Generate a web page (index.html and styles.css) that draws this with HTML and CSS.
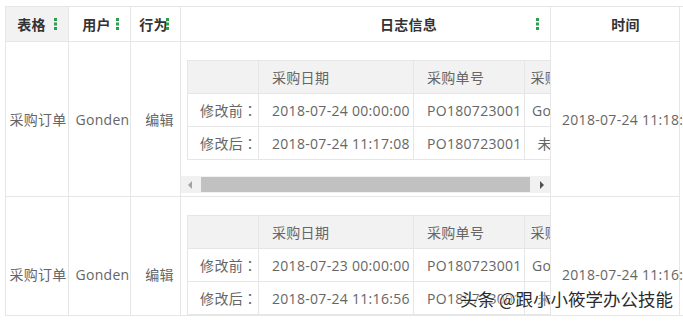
FILE: index.html
```html
<!DOCTYPE html>
<html lang="zh-CN">
<head>
<meta charset="utf-8">
<title>操作日志</title>
<link rel="stylesheet" href="styles.css">
</head>
<body>
<div class="page">
  <div class="grid">
    <div class="th th-table"><span class="label">表格</span><svg class="handle" viewBox="0 0 3 12" width="3" height="12"><rect x="0" y="0" width="3" height="3"/><rect x="0" y="4.5" width="3" height="3"/><rect x="0" y="9" width="3" height="3"/></svg></div>
    <div class="th th-user"><span class="label">用户</span><svg class="handle" viewBox="0 0 3 12" width="3" height="12"><rect x="0" y="0" width="3" height="3"/><rect x="0" y="4.5" width="3" height="3"/><rect x="0" y="9" width="3" height="3"/></svg></div>
    <div class="th th-action"><span class="label">行为</span><svg class="handle" viewBox="0 0 3 12" width="3" height="12"><rect x="0" y="0" width="3" height="3"/><rect x="0" y="4.5" width="3" height="3"/><rect x="0" y="9" width="3" height="3"/></svg></div>
    <div class="th th-log"><span class="label">日志信息</span><svg class="handle" viewBox="0 0 3 12" width="3" height="12"><rect x="0" y="0" width="3" height="3"/><rect x="0" y="4.5" width="3" height="3"/><rect x="0" y="9" width="3" height="3"/></svg></div>
    <div class="th th-time"><span class="label">时间</span></div>

    <div class="td center col-a">采购订单</div>
    <div class="td center col-b">Gonden</div>
    <div class="td center col-c">编辑</div>
    <div class="td log">
      <div class="scroller">
        <div class="sub">
          <div class="sc head label-col"></div>
          <div class="sc head">采购日期</div>
          <div class="sc head">采购单号</div>
          <div class="sc head mid">采购人员</div>
          <div class="sc head">备注</div>

          <div class="sc label-col">修改前<span class="colon">：</span></div>
          <div class="sc">2018-07-24 00:00:00</div>
          <div class="sc">PO180723001</div>
          <div class="sc mid">Gonden</div>
          <div class="sc"></div>

          <div class="sc label-col">修改后<span class="colon">：</span></div>
          <div class="sc">2018-07-24 11:17:08</div>
          <div class="sc">PO180723001</div>
          <div class="sc mid">未审核</div>
          <div class="sc"></div>
        </div>
      </div>
      <div class="hbar">
        <div class="hbar-btn"><span class="arrow-left"></span></div>
        <div class="hbar-thumb"></div>
        <div class="hbar-track"></div>
        <div class="hbar-btn"><span class="arrow-right"></span></div>
      </div>
    </div>
    <div class="td time">2018-07-24 11:18:02</div>

    <div class="td center col-a">采购订单</div>
    <div class="td center col-b">Gonden</div>
    <div class="td center col-c">编辑</div>
    <div class="td log">
      <div class="scroller">
        <div class="sub">
          <div class="sc head label-col"></div>
          <div class="sc head">采购日期</div>
          <div class="sc head">采购单号</div>
          <div class="sc head mid">采购人员</div>
          <div class="sc head">备注</div>

          <div class="sc label-col">修改前<span class="colon">：</span></div>
          <div class="sc">2018-07-23 00:00:00</div>
          <div class="sc">PO180723001</div>
          <div class="sc mid">Gonden</div>
          <div class="sc"></div>

          <div class="sc label-col">修改后<span class="colon">：</span></div>
          <div class="sc">2018-07-24 11:16:56</div>
          <div class="sc">PO180723001</div>
          <div class="sc mid">未审核</div>
          <div class="sc"></div>
        </div>
      </div>
      <div class="hbar">
        <div class="hbar-btn"><span class="arrow-left"></span></div>
        <div class="hbar-thumb"></div>
        <div class="hbar-track"></div>
        <div class="hbar-btn"><span class="arrow-right"></span></div>
      </div>
    </div>
    <div class="td time">2018-07-24 11:16:58</div>
  </div>
  <div class="watermark">头条 @跟小小筱学办公技能</div>
</div>
</body>
</html>
```

FILE: styles.css
```css
html {
  overflow: hidden;
}

body {
  margin: 0;
  background: #fff;
  color: #666;
  font-family: "Open Sans", "Noto Sans CJK SC", sans-serif;
  font-size: 14px;
  letter-spacing: 0.3px;
}

.page {
  position: relative;
  width: 683px;
  height: 321px;
  padding: 6px 0 0 5px;
  box-sizing: border-box;
}

.grid {
  display: grid;
  grid-template-columns: 63px 62px 50px 370px 129px;
  grid-template-rows: 35px 155px 155px;
  height: 310px;
  box-sizing: border-box;
  border-left: 1px solid #e6e6e6;
  border-top: 1px solid #e6e6e6;
  border-bottom: 1px solid #e6e6e6;
  overflow-x: visible;
  overflow-y: clip;
}

.th,
.td {
  box-sizing: border-box;
  border-right: 1px solid #e6e6e6;
  border-bottom: 1px solid #e6e6e6;
  min-width: 0;
  display: flex;
  align-items: center;
}

.th {
  position: relative;
  justify-content: center;
  font-weight: bold;
  color: #333;
  white-space: nowrap;
}

.th-table { background: #f2f2f2; }
.th-table .label { padding-right: 11px; }
.th-user .label { padding-right: 6px; }
.th-action .label { padding-right: 4px; }
.th-log .label { padding-left: 86px; }
.th-time .label { padding-left: 21px; }

.handle {
  position: absolute;
  right: 11px;
  top: 11px;
  fill: #2e9e4e;
}

.td.center {
  justify-content: center;
  white-space: nowrap;
}

.col-a { padding-left: 2px; }
.col-b { padding-left: 6px; }
.col-c { padding-left: 8px; }

.log {
  flex-direction: column;
  align-items: stretch;
  padding-bottom: 3px;
}

.scroller {
  overflow: hidden;
  padding: 18px 0 16px 6px;
}

.sub {
  display: grid;
  width: max-content;
  grid-template-columns: 71px 155px 111px 69px 90px;
  grid-auto-rows: 33px;
  border-left: 1px solid #e6e6e6;
  border-top: 1px solid #e6e6e6;
}

.sc {
  box-sizing: border-box;
  border-right: 1px solid #e6e6e6;
  border-bottom: 1px solid #e6e6e6;
  display: flex;
  align-items: center;
  padding-left: 13px;
  white-space: nowrap;
  overflow: hidden;
}

.sc.head {
  background: #f2f2f2;
}

.sc.label-col {
  justify-content: flex-end;
  padding: 0 1px 0 0;
}

.colon {
  display: inline-block;
  width: 14px;
  text-align: center;
  font-family: "Noto Sans CJK TC", "Noto Sans CJK SC", sans-serif;
}

.sc.mid {
  justify-content: center;
  padding: 0;
}

.hbar {
  flex: none;
  display: flex;
  height: 17px;
  background: #f1f1f1;
}

.hbar-btn {
  flex: none;
  width: 17px;
  display: flex;
  align-items: center;
  justify-content: center;
}

.arrow-left {
  width: 0;
  height: 0;
  border-top: 4px solid transparent;
  border-bottom: 4px solid transparent;
  border-right: 4px solid #a3a3a3;
}

.arrow-right {
  width: 0;
  height: 0;
  border-top: 4px solid transparent;
  border-bottom: 4px solid transparent;
  border-left: 4px solid #505050;
}

.hbar-thumb {
  flex: none;
  width: 329px;
  margin: 1px 0 1px 3px;
  background: #c1c1c1;
}

.hbar-track {
  flex: 1;
}

.time {
  padding-left: 11px;
  white-space: nowrap;
}

.watermark {
  position: absolute;
  right: 10px;
  top: 289px;
  font-family: "Noto Sans CJK SC", sans-serif;
  font-size: 17.5px;
  line-height: 20px;
  letter-spacing: 0;
  color: #2b2b2b;
  white-space: nowrap;
  text-shadow: 0 0 2px #fff, 0 0 2px #fff, 0 0 3px #fff;
}
```
